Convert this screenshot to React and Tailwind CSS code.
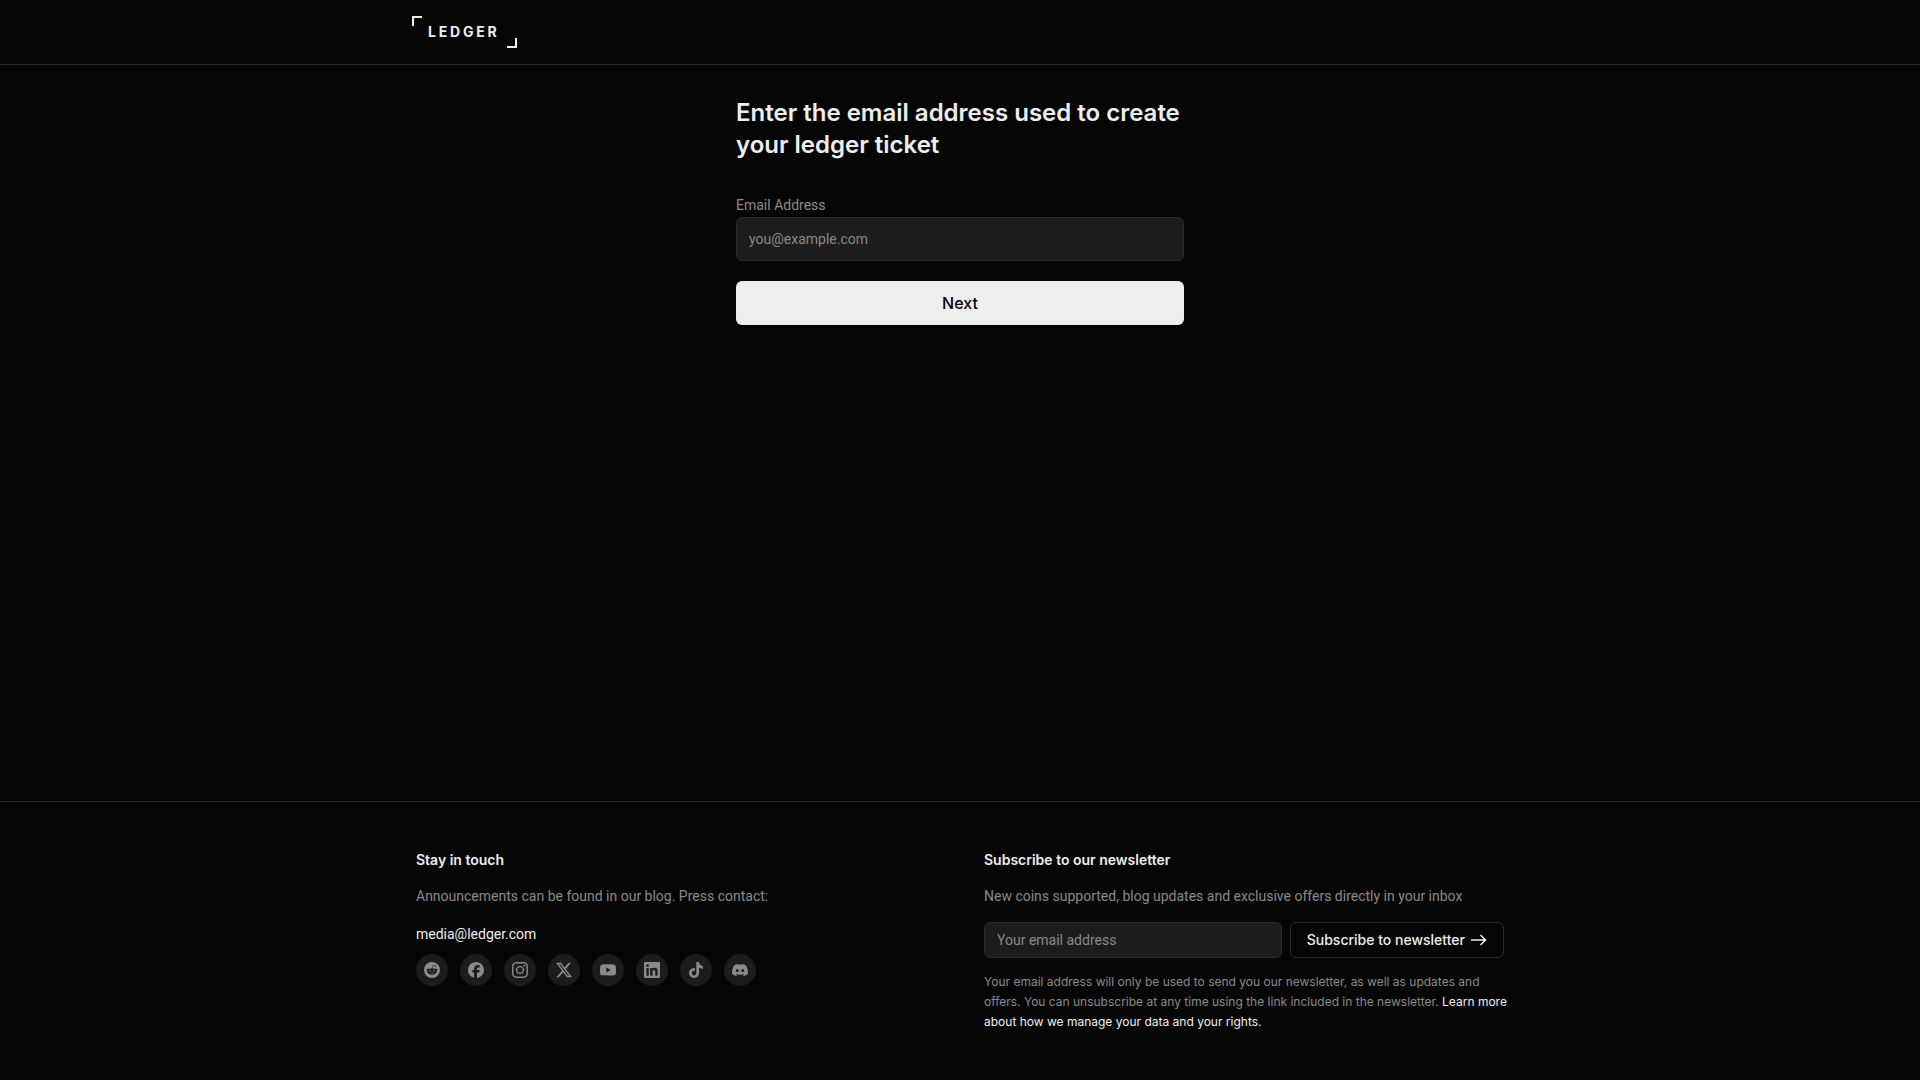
import React, { useState } from 'react';
import {
  SiFacebook,
  SiInstagram,
  SiX,
  SiYoutube,
  SiTiktok,
  SiDiscord,
} from 'react-icons/si';

const RedditIcon = ({ className }) => (
  <svg viewBox="0 0 24 24" fill="currentColor" className={className} aria-hidden="true">
    <path d="M12 0A12 12 0 0 0 0 12a12 12 0 0 0 12 12 12 12 0 0 0 12-12A12 12 0 0 0 12 0zm5.01 4.744c.688 0 1.25.561 1.25 1.249a1.25 1.25 0 0 1-2.498.056l-2.597-.547-.8 3.747c1.824.07 3.48.632 4.674 1.488.308-.309.73-.491 1.207-.491.968 0 1.754.786 1.754 1.754 0 .716-.435 1.333-1.01 1.614a3.111 3.111 0 0 1 .042.52c0 2.694-3.13 4.87-7.004 4.87-3.874 0-7.004-2.176-7.004-4.87 0-.183.015-.366.043-.534A1.748 1.748 0 0 1 4.028 12c0-.968.786-1.754 1.754-1.754.463 0 .898.196 1.207.49 1.207-.883 2.878-1.43 4.744-1.487l.885-4.182a.342.342 0 0 1 .14-.197.35.35 0 0 1 .238-.042l2.906.617a1.214 1.214 0 0 1 1.108-.701zM9.25 12C8.561 12 8 12.562 8 13.25c0 .687.561 1.248 1.25 1.248.687 0 1.248-.561 1.248-1.249 0-.688-.561-1.249-1.249-1.249zm5.5 0c-.687 0-1.248.561-1.248 1.25 0 .687.561 1.248 1.249 1.248.688 0 1.249-.561 1.249-1.249 0-.687-.562-1.249-1.25-1.249zm-5.466 3.99a.327.327 0 0 0-.231.094.33.33 0 0 0 0 .463c.842.842 2.484.913 2.961.913.477 0 2.105-.056 2.961-.913a.361.361 0 0 0 .029-.463.33.33 0 0 0-.464 0c-.547.533-1.684.73-2.512.73-.828 0-1.979-.196-2.512-.73a.326.326 0 0 0-.232-.095z" />
  </svg>
);

const LinkedinIcon = ({ className }) => (
  <svg viewBox="0 0 24 24" fill="currentColor" className={className} aria-hidden="true">
    <path d="M20.447 20.452h-3.554v-5.569c0-1.328-.027-3.037-1.852-3.037-1.853 0-2.136 1.445-2.136 2.939v5.667H9.351V9h3.414v1.561h.046c.477-.9 1.637-1.85 3.37-1.85 3.601 0 4.267 2.37 4.267 5.455v6.286zM5.337 7.433a2.062 2.062 0 0 1-2.063-2.065 2.064 2.064 0 1 1 2.063 2.065zm1.782 13.019H3.555V9h3.564v11.452zM22.225 0H1.771C.792 0 0 .774 0 1.729v20.542C0 23.227.792 24 1.771 24h20.451C23.2 24 24 23.227 24 22.271V1.729C24 .774 23.2 0 22.222 0h.003z" />
  </svg>
);

const socials = [
  { name: 'Reddit', icon: RedditIcon },
  { name: 'Facebook', icon: SiFacebook },
  { name: 'Instagram', icon: SiInstagram },
  { name: 'X', icon: SiX },
  { name: 'YouTube', icon: SiYoutube },
  { name: 'LinkedIn', icon: LinkedinIcon },
  { name: 'TikTok', icon: SiTiktok },
  { name: 'Discord', icon: SiDiscord },
];

const Header = () => (
  <header className="border-b border-[#2a2a2a]">
    <div className="mx-auto flex h-16 w-full max-w-6xl items-center px-7">
      <a href="#" aria-label="Ledger" className="flex h-8">
        <svg viewBox="0 0 10 10" className="h-[10px] w-[10px] self-start" fill="#eee" aria-hidden="true">
          <path d="M0 0h10v2H2v8H0z" />
        </svg>
        <span className="self-center pl-1.5 text-sm font-bold tracking-[0.2em]">LEDGER</span>
        <svg viewBox="0 0 10 10" className="ml-[7px] h-[10px] w-[10px] self-end" fill="#eee" aria-hidden="true">
          <path d="M8 0h2v10H0V8h8z" />
        </svg>
      </a>
    </div>
  </header>
);

const TicketForm = () => {
  const [email, setEmail] = useState('');

  return (
    <form className="mx-auto w-full max-w-md" onSubmit={(e) => e.preventDefault()}>
      <h1 className="text-2xl font-semibold">
        Enter the email address used to create your ledger ticket
      </h1>
      <label htmlFor="email" className="mt-[34px] block pb-0.5 font-['Roboto',sans-serif] text-sm text-[#8a8a8a]">
        Email Address
      </label>
      <input
        id="email"
        type="email"
        value={email}
        onChange={(e) => setEmail(e.target.value)}
        placeholder="you@example.com"
        className="h-11 w-full rounded-md border border-[#2a2a2a] bg-[#1c1c1c] px-3 font-['Roboto',sans-serif] text-sm placeholder-[#8a8a8a] focus:outline-none focus:border-[#525252]"
      />
      <button
        type="submit"
        className="mt-5 h-11 w-full rounded-md bg-[#eee] text-base font-medium text-[#060606] hover:bg-white transition-colors"
      >
        Next
      </button>
    </form>
  );
};

const Footer = () => {
  const [newsletterEmail, setNewsletterEmail] = useState('');

  return (
    <footer className="border-t border-[#2a2a2a]">
      <div className="mx-auto grid w-full max-w-6xl gap-12 px-8 py-12 md:grid-cols-2">
        {/* Contact + socials */}
        <div>
          <h2 className="text-sm font-semibold">Stay in touch</h2>
          <p className="mt-4 font-['Roboto',sans-serif] text-sm text-[#8a8a8a]">
            Announcements can be found in our blog. Press contact:
          </p>
          <a href="mailto:media@ledger.com" className="mt-[18px] block font-['Roboto',sans-serif] text-sm">
            media@ledger.com
          </a>
          <div className="mt-[10px] flex flex-wrap gap-3">
            {socials.map(({ name, icon: Icon }) => (
              <a
                key={name}
                href="#"
                aria-label={name}
                className="flex h-8 w-8 items-center justify-center rounded-full bg-[#1c1c1c] text-[#8a8a8a] hover:text-white transition-colors"
              >
                <Icon className="h-4 w-4" />
              </a>
            ))}
          </div>
        </div>

        {/* Newsletter */}
        <div>
          <h2 className="text-sm font-semibold">Subscribe to our newsletter</h2>
          <p className="mt-4 font-['Roboto',sans-serif] text-sm text-[#8a8a8a]">
            New coins supported, blog updates and exclusive offers directly in your inbox
          </p>
          <form className="mt-4 flex gap-2" onSubmit={(e) => e.preventDefault()}>
            <input
              type="email"
              aria-label="Your email address"
              value={newsletterEmail}
              onChange={(e) => setNewsletterEmail(e.target.value)}
              placeholder="Your email address"
              className="h-9 min-w-0 flex-1 rounded-md border border-[#2a2a2a] bg-[#1c1c1c] px-3 font-['Roboto',sans-serif] text-sm placeholder-[#8a8a8a] focus:outline-none focus:border-[#525252]"
            />
            <button
              type="submit"
              className="flex h-9 items-center gap-1.5 whitespace-nowrap rounded-md border border-[#2a2a2a] px-4 text-sm font-medium hover:bg-[#1c1c1c] transition-colors"
            >
              Subscribe to newsletter
              <svg viewBox="0 0 16 12" className="h-3 w-4" fill="none" stroke="currentColor" strokeWidth="1.5" aria-hidden="true">
                <path d="M0 6h14.5M9.5 1l5 5-5 5" />
              </svg>
            </button>
          </form>
          <p className="-mr-1 mt-[14px] text-xs leading-5 text-[#8a8a8a]">
            Your email address will only be used to send you our newsletter, as well as updates and
            offers. You can unsubscribe at any time using the link included in the newsletter.{' '}
            <a href="#" className="text-[#eee] hover:underline">
              Learn more about how we manage your data and your rights.
            </a>
          </p>
        </div>
      </div>
    </footer>
  );
};

const App = () => (
  <div className="flex min-h-screen flex-col bg-[#060606] font-['Inter',sans-serif] text-[#eee]">
    <Header />
    <main className="flex-1 px-4 pt-8 pb-12">
      <TicketForm />
    </main>
    <Footer />
  </div>
);

export default App;
